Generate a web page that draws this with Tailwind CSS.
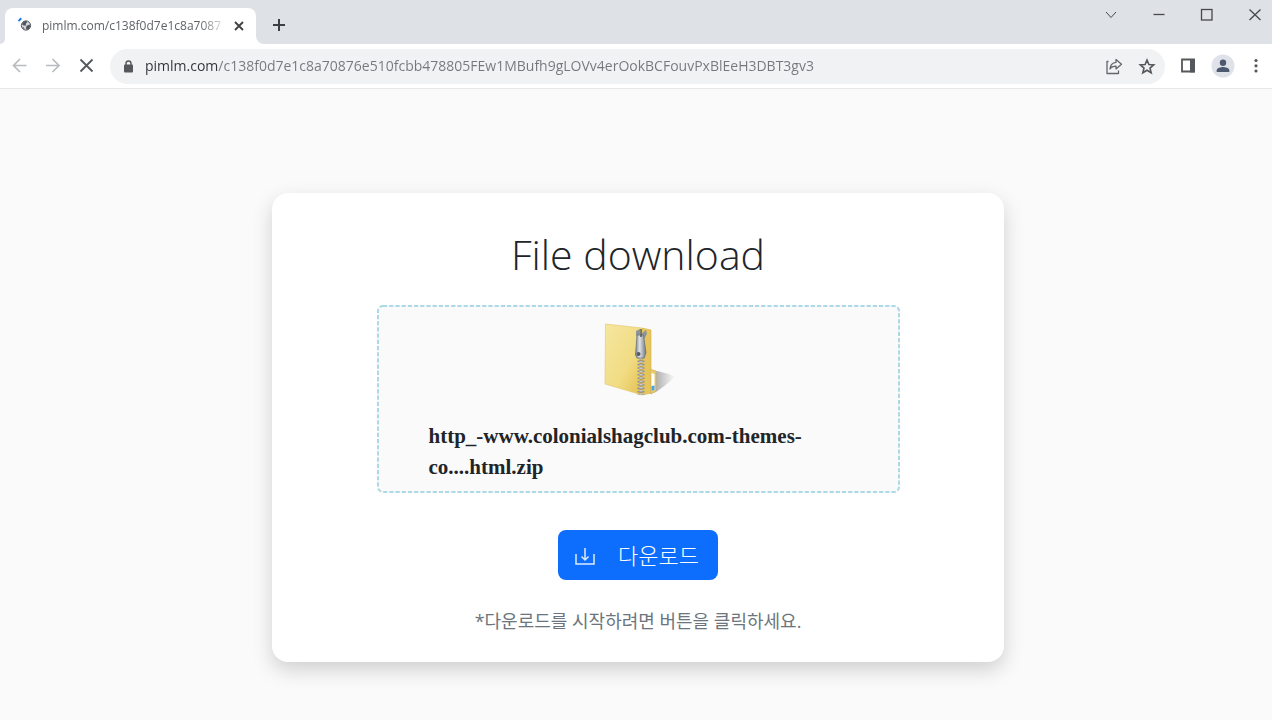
<!DOCTYPE html>
<html lang="ko">
  <head>
    <meta charset="UTF-8" />
    <meta name="viewport" content="width=device-width, initial-scale=1.0" />
    <title>File download</title>
    <script src="https://cdn.jsdelivr.net/npm/@tailwindcss/browser@4"></script>
  </head>
  <body class="min-h-screen flex flex-col bg-[#fafafa] text-[#212529] font-['Open_Sans','Noto_Sans_CJK_KR',sans-serif]">
    <!-- Tab strip -->
    <header>
      <div class="flex h-11 bg-[#dee1e6]">
        <div class="flex items-end w-[5px] bg-white">
          <div class="w-full h-full rounded-br-lg bg-[#dee1e6]"></div>
        </div>
        <div class="bg-[#dee1e6] pt-2">
          <div class="flex items-center w-[251px] h-9 pl-3 pr-[6px] rounded-t-lg bg-white">
            <svg class="w-5 h-5 shrink-0" viewBox="0 0 20 20" aria-hidden="true">
              <circle cx="9" cy="9.500" r="4.600" fill="#d3d6da" stroke="#4d5258" stroke-width="1" />
              <path d="M5 8l2-2.500 2.500-.5.500 1.500-1.500 1.500 1 1.500H6.500zM9.500 10l3-1.500.8 2-1.500 2.500-2 .8-.8-1.500zM5 11l2 .5.500 2z" fill="#4d5258" />
              <path d="M1.800 5.200a5 5 0 0 1 2.600-2.900" fill="none" stroke="#1a73e8" stroke-width="2" />
            </svg>
            <span class="flex-1 ml-[5px] whitespace-nowrap text-[12px] leading-5 text-[#5f6368] mask-r-from-85%">pimlm.com/c138f0d7e1c8a7087</span>
            <button type="button" class="p-1" title="Close tab" aria-label="Close tab">
              <svg class="w-[14px] h-[14px]" viewBox="0 0 14 14" fill="none" stroke="#3c4043" stroke-width="1.800" aria-hidden="true">
                <path d="M3 3l8 8M11 3l-8 8" />
              </svg>
            </button>
          </div>
        </div>
        <div class="flex-1 bg-white">
          <div class="flex items-start h-full rounded-bl-lg bg-[#dee1e6]">
            <button type="button" class="mt-[14px] ml-3 p-1" title="New tab" aria-label="New tab">
              <svg class="w-[14px] h-[14px]" viewBox="0 0 14 14" fill="none" stroke="#3c4043" stroke-width="2" aria-hidden="true">
                <path d="M7 1v12M1 7h12" />
              </svg>
            </button>
            <div class="flex ml-auto pt-[7px] pr-[9px] gap-8 text-[#45484c]">
              <button type="button" title="Search tabs" aria-label="Search tabs">
                <svg class="w-4 h-4" viewBox="0 0 16 16" fill="none" stroke="currentColor" aria-hidden="true"><path d="M3 5l5 5.500L13 5" /></svg>
              </button>
              <button type="button" title="Minimize" aria-label="Minimize">
                <svg class="w-4 h-4" viewBox="0 0 16 16" fill="none" stroke="currentColor" stroke-width="1.300" aria-hidden="true"><path d="M2.500 7.500h11" /></svg>
              </button>
              <button type="button" title="Maximize" aria-label="Maximize">
                <svg class="w-4 h-4" viewBox="0 0 16 16" fill="none" stroke="currentColor" stroke-width="1.300" aria-hidden="true"><rect x="2.500" y="2.500" width="10.500" height="10.500" /></svg>
              </button>
              <button type="button" title="Close" aria-label="Close">
                <svg class="w-4 h-4" viewBox="0 0 16 16" fill="none" stroke="currentColor" stroke-width="1.300" aria-hidden="true"><path d="M2.500 2.500l11 10.500M13.500 2.500l-11 10.500" /></svg>
              </button>
            </div>
          </div>
        </div>
      </div>

      <!-- Toolbar -->
      <div class="flex items-center h-[45px] pl-[10px] pr-[6px] bg-white border-b border-[#e6e7e8]">
        <div class="flex items-center gap-[14px] text-[#b9bbbe]">
          <button type="button" title="Back" aria-label="Back">
            <svg class="w-5 h-5" viewBox="0 0 20 20" fill="none" stroke="currentColor" stroke-width="1.700" aria-hidden="true"><path d="M16.500 9.500H4M10 3L3.500 9.500 10 16" /></svg>
          </button>
          <button type="button" title="Forward" aria-label="Forward">
            <svg class="w-5 h-5" viewBox="0 0 20 20" fill="none" stroke="currentColor" stroke-width="1.700" aria-hidden="true"><path d="M2 9.500h12.500M8.500 3L15 9.500 8.500 16" /></svg>
          </button>
          <button type="button" class="text-[#54575b]" title="Stop" aria-label="Stop">
            <svg class="w-5 h-5" viewBox="0 0 20 20" fill="none" stroke="currentColor" stroke-width="1.800" aria-hidden="true"><path d="M2.500 3.500l12 12M14.500 3.500l-12 12" /></svg>
          </button>
        </div>
        <div class="flex flex-1 items-center h-[35px] ml-3 pl-[10px] pr-2 rounded-full bg-[#f0f2f3]">
          <svg class="w-4 h-4 shrink-0" viewBox="0 0 16 16" aria-hidden="true">
            <rect x="4" y="6.500" width="9" height="8" rx="1" fill="#54575b" />
            <path d="M6 7V5.500a2.500 2.500 0 0 1 5 0V7" fill="none" stroke="#54575b" stroke-width="1.400" />
          </svg>
          <!-- host part is darker than the path -->
          <input
            type="text"
            aria-label="Address"
            value="pimlm.com/c138f0d7e1c8a70876e510fcbb478805FEw1MBufh9gLOVv4erOokBCFouvPxBlEeH3DBT3gv3"
            class="flex-1 min-w-0 ml-[9px] text-[14px] leading-5 outline-none text-transparent bg-clip-text bg-[linear-gradient(90deg,#303336_73px,#74787c_73px)]"
          />
          <button type="button" class="ml-4" title="Share" aria-label="Share">
            <svg class="w-5 h-5" viewBox="0 0 20 20" fill="none" stroke="#63676b" stroke-width="1.300" stroke-linejoin="round" aria-hidden="true">
              <path d="M4.500 5.500H3v12h11.500v-3" />
              <path d="M12 3.500l5.500 4.700-5.500 4.700v-2.800c-3 0-4.800.8-6 2.900.3-4 2.500-6.300 6-6.700z" />
            </svg>
          </button>
          <button type="button" class="ml-[13px]" title="Bookmark" aria-label="Bookmark">
            <svg class="w-5 h-5" viewBox="0 0 20 20" fill="none" stroke="#54575b" stroke-width="1.600" aria-hidden="true">
              <path d="M10 4l1.900 4.500 4.800.4-3.700 3.200 1.200 4.700L10 14.200l-4.200 2.600L7 12.100 3.300 8.900l4.800-.4z" />
            </svg>
          </button>
        </div>
        <button type="button" class="ml-3" title="Side panel" aria-label="Side panel">
          <svg class="w-5 h-5" viewBox="0 0 20 20" aria-hidden="true">
            <path d="M5 3.500h12v12H5z" fill="#fff" stroke="#54575b" stroke-width="1.800" />
            <path d="M13 3h5v13.400h-5z" fill="#54575b" />
          </svg>
        </button>
        <button type="button" class="ml-[14px]" title="Profile" aria-label="Profile">
          <svg class="w-6 h-6" viewBox="0 0 24 24" aria-hidden="true">
            <circle cx="12" cy="12" r="11.500" fill="#dfe2e9" />
            <circle cx="12" cy="8.700" r="3.200" fill="#4d596e" />
            <path d="M5.700 18v-1.700c0-2.200 4.200-3.300 6.300-3.300s6.300 1.100 6.300 3.300V18z" fill="#4d596e" />
          </svg>
        </button>
        <button type="button" class="ml-[11px]" title="Menu" aria-label="Menu">
          <svg class="w-5 h-5" viewBox="0 0 20 20" fill="#54575b" aria-hidden="true">
            <circle cx="10" cy="4.500" r="1.600" /><circle cx="10" cy="9.800" r="1.600" /><circle cx="10" cy="15" r="1.600" />
          </svg>
        </button>
      </div>
    </header>

    <!-- Page -->
    <main class="flex-1 pt-[104px] pb-14 pl-1">
      <section class="max-w-[732px] mx-auto pt-9 pb-[26px] rounded-2xl bg-white shadow-[0_8px_20px_rgba(0,0,0,0.17)]">
        <h1 class="text-center text-[41px] leading-[50px] font-light">File download</h1>

        <div class="relative max-w-[523px] mx-auto mt-[26px] px-[52px] pt-[14px] pb-[10px] rounded-md bg-[#fafafa]">
          <!-- dashed outline, tighter than border-dashed -->
          <svg class="absolute inset-0 w-full h-full" fill="none" stroke="#add8e6" stroke-width="2" stroke-dasharray="4.200 2" aria-hidden="true">
            <rect class="x-[1px] w-[calc(100%-2px)] h-[calc(100%-2px)]" x="1" y="1" rx="5" />
          </svg>
          <svg class="w-20 h-20 mx-auto" viewBox="0 0 80 80" aria-hidden="true">
            <defs>
              <linearGradient id="folder" x1="0" y1="0" x2="1" y2="1">
                <stop offset="0" stop-color="#f6e7a0" />
                <stop offset="0.600" stop-color="#f1dc83" />
                <stop offset="1" stop-color="#e3bf50" />
              </linearGradient>
              <linearGradient id="pull" x1="0" y1="0" x2="1" y2="0">
                <stop offset="0" stop-color="#7c848c" />
                <stop offset="0.400" stop-color="#dfe3e7" />
                <stop offset="1" stop-color="#6f7780" />
              </linearGradient>
              <linearGradient id="shade" x1="0" y1="0" x2="1" y2="0">
                <stop offset="0" stop-color="#999" />
                <stop offset="1" stop-color="#999" stop-opacity="0" />
              </linearGradient>
            </defs>
            <path d="M52 51c8 1 18 3 25 7-5 4-11 10-19 15l-6 2z" fill="url(#shade)" />
            <path d="M44 9l9 2v63l-9 2z" fill="#e6c65c" stroke="#d3b04b" stroke-width=".6" />
            <path d="M52 50l6 2v20l-5 3z" fill="#e8cc6b" stroke="#d3b04b" stroke-width=".6" />
            <path d="M53.500 54l3 1v16l-3 1z" fill="#fff" />
            <path d="M53.500 67l3-.5V71l-3 1z" fill="#4aa3e0" />
            <path d="M7.500 5L44 9v67L7 65z" fill="url(#folder)" stroke="#e2c566" stroke-width=".6" />
            <path d="M43 38v38" stroke="#b99a45" stroke-width="3" />
            <path d="M43 38v38" stroke="#8e9197" stroke-width="7" stroke-dasharray="1.600 1.800" />
            <path d="M43 39v37" stroke="#c9cbce" stroke-width="3" stroke-dasharray="1.600 1.600" />
            <path d="M38 12l4-2v6l6-5 1 4-3 5h-6l-2-4z" fill="#8b939b" />
            <path d="M39 16h6.500l2.500 18-2 5h-7l-1.500-3z" fill="url(#pull)" stroke="#626a72" stroke-width=".7" />
            <circle cx="40.500" cy="35" r="2" fill="#555c63" />
            <path d="M43 10v8" stroke="#4d545b" stroke-width="1.400" />
          </svg>
          <p class="mt-[22px] text-[21px] leading-[31px] font-bold font-['Liberation_Serif',serif]">
            http_-www.colonialshagclub.com-themes-<br />co....html.zip
          </p>
        </div>

        <button type="button" class="flex items-center w-40 h-[50px] mx-auto mt-[37px] pl-4 rounded-lg bg-[#0d6efd] text-white text-[22px] leading-[30px] font-light">
          <svg class="w-[22px] h-[22px]" viewBox="0 0 22 22" fill="none" stroke="#dcebff" stroke-width="1.500" aria-hidden="true">
            <path d="M2 10v10h18V10M11 4v12M7.500 12.500L11 16l3.500-3.500" />
          </svg>
          <span class="ml-[22px]">다운로드</span>
        </button>

        <p class="mt-[26px] text-center text-[18px] leading-[30px] text-[#6c757d]">*다운로드를 시작하려면 버튼을 클릭하세요.</p>
      </section>
    </main>
  </body>
</html>
